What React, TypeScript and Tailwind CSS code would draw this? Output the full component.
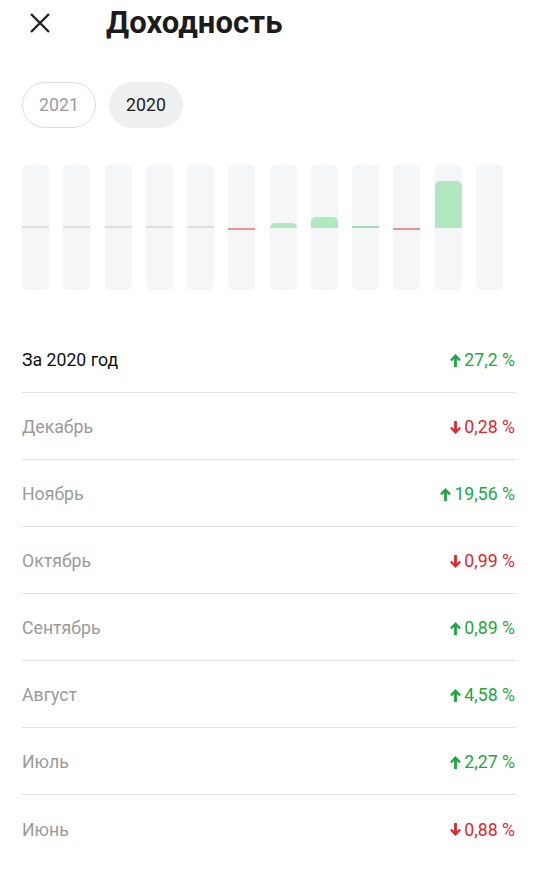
import React from "react";

type Month = { name: string; value: number };

const months: Month[] = [
  { name: "Декабрь", value: -0.28 },
  { name: "Ноябрь", value: 19.56 },
  { name: "Октябрь", value: -0.99 },
  { name: "Сентябрь", value: 0.89 },
  { name: "Август", value: 4.58 },
  { name: "Июль", value: 2.27 },
  { name: "Июнь", value: -0.88 },
];

// Jan..Dec as drawn in the chart (Dec shows nothing)
const bars: (number | null)[] = [0, 0, 0, 0, 0, -0.88, 2.27, 4.58, 0.89, -0.99, 19.56, null];

function Arrow({ up }: { up: boolean }) {
  return (
    <svg
      width="11"
      height="13"
      viewBox="0 0 10 12"
      className={up ? "fill-[#1ea83c]" : "fill-[#e1262c] rotate-180"}
    >
      <path d="M5 0L10 5.2L8.5 6.7L6.3 4.5V12H3.7V4.5L1.5 6.7L0 5.2Z" />
    </svg>
  );
}

function Bar({ value }: { value: number | null }) {
  const scale = 2.4;
  let top: React.ReactNode = null;
  let bottom: React.ReactNode = null;
  if (value === 0) {
    top = <div className="h-[2px] w-full bg-[#dedfe1]" />;
  } else if (value !== null && value > 0) {
    const h = Math.max(2, value * scale);
    top = (
      <div
        className={h > 3 ? "w-full rounded-t-[5px] bg-[#b1e8c0]" : "w-full bg-[#a9dcb7]"}
        style={{ height: h }}
      />
    );
  } else if (value !== null && value < 0) {
    bottom = <div className="h-[2px] w-full bg-[#ee8f91]" />;
  }
  return (
    <div className="flex h-[125px] w-[27px] flex-col overflow-hidden rounded-[5px] bg-[#f5f6f8]">
      <div className="flex h-[63px] flex-col justify-end">{top}</div>
      <div className="flex-1">{bottom}</div>
    </div>
  );
}

function Row({ label, value, dark, last }: { label: string; value: number; dark?: boolean; last?: boolean }) {
  const up = value >= 0;
  const txt = Math.abs(value).toString().replace(".", ",") + " %";
  return (
    <div
      className={
        "flex h-[67px] items-center justify-between pt-[3px] pr-[1px] " +
        (last ? "" : "border-b border-[#e3e3e3]")
      }
    >
      <span className={dark ? "text-[#111]" : "text-[#9a9a9a]"}>{label}</span>
      <span className={"flex items-center gap-[3px] " + (up ? "text-[#1ea83c]" : "text-[#e1262c]")}>
        <Arrow up={up} />
        {txt}
      </span>
    </div>
  );
}

export default function App() {
  return (
    <div className="min-h-[870px] w-[538px] bg-white font-['Roboto',sans-serif] text-[17.7px]">
      <div className="flex h-[44px] items-center pt-[2px]">
        <svg width="24" height="24" viewBox="0 0 24 24" className="ml-[28px] stroke-[#222]" strokeWidth="2.4">
          <path d="M3 3l18 18M21 3L3 21" />
        </svg>
        <h1 className="ml-[54px] text-[31px] font-bold tracking-[0.1px] text-[#1c1c1c]">Доходность</h1>
      </div>

      <div className="mt-[38px] flex gap-[13px] px-[22px]">
        <div className="flex h-[46px] w-[74px] items-center justify-center rounded-full border border-[#dcdcdc] text-[#9a9a9a]">
          2021
        </div>
        <div className="flex h-[46px] w-[74px] items-center justify-center rounded-full bg-[#eeeff1] text-[#1c1c1c]">
          2020
        </div>
      </div>

      <div className="ml-[22px] mt-[37px] flex w-[481px] justify-between">
        {bars.map((v, i) => (
          <Bar key={i} value={v} />
        ))}
      </div>

      <div className="mt-[36px] px-[22px]">
        <Row label="За 2020 год" value={27.2} dark />
        {months.map((m, i) => (
          <Row key={m.name} label={m.name} value={m.value} last={i === months.length - 1} />
        ))}
      </div>
    </div>
  );
}
